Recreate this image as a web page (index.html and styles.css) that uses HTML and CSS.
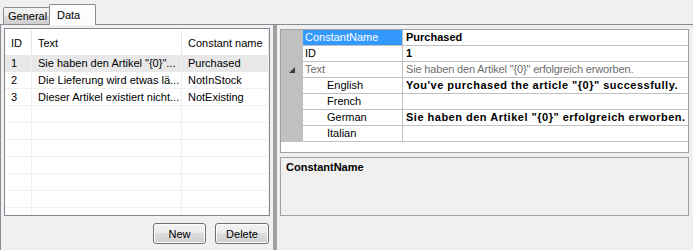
FILE: index.html
```html
<!DOCTYPE html>
<html>
<head>
<meta charset="utf-8">
<link rel="stylesheet" href="styles.css">
</head>
<body>
<div class="tabctl">
  <div class="tabstrip">
    <div class="tab">General</div>
    <div class="tab active">Data</div>
  </div>
  <div class="page">
    <div class="left">
      <div class="list">
        <div class="lrow lhead">
          <div class="c c1">ID</div>
          <div class="c c2">Text</div>
          <div class="c c3">Constant name</div>
        </div>
        <div class="lrow sel">
          <div class="c c1">1</div>
          <div class="c c2">Sie haben den Artikel "{0}"...</div>
          <div class="c c3">Purchased</div>
        </div>
        <div class="lrow">
          <div class="c c1">2</div>
          <div class="c c2">Die Lieferung wird etwas lä...</div>
          <div class="c c3">NotInStock</div>
        </div>
        <div class="lrow">
          <div class="c c1">3</div>
          <div class="c c2">Dieser Artikel existiert nicht...</div>
          <div class="c c3">NotExisting</div>
        </div>
        <div class="lrow"><div class="c c1"></div><div class="c c2"></div><div class="c c3"></div></div>
        <div class="lrow"><div class="c c1"></div><div class="c c2"></div><div class="c c3"></div></div>
        <div class="lrow"><div class="c c1"></div><div class="c c2"></div><div class="c c3"></div></div>
        <div class="lrow"><div class="c c1"></div><div class="c c2"></div><div class="c c3"></div></div>
        <div class="lrow"><div class="c c1"></div><div class="c c2"></div><div class="c c3"></div></div>
        <div class="lrow"><div class="c c1"></div><div class="c c2"></div><div class="c c3"></div></div>
        <div class="lrow"><div class="c c1"></div><div class="c c2"></div><div class="c c3"></div></div>
      </div>
      <div class="buttons">
        <button class="btn btn-new">New</button>
        <button class="btn btn-del">Delete</button>
      </div>
    </div>
    <div class="splitter"></div>
    <div class="right">
      <div class="pgrid">
        <div class="prow">
          <div class="pm"></div>
          <div class="pn selname">ConstantName</div>
          <div class="pv bold">Purchased</div>
        </div>
        <div class="prow">
          <div class="pm"></div>
          <div class="pn">ID</div>
          <div class="pv bold">1</div>
        </div>
        <div class="prow gray">
          <div class="pm"><svg class="tri" width="6" height="6" viewBox="0 0 6 6"><polygon points="0,6 6,0 6,6" fill="#3c3c3c"/></svg></div>
          <div class="pn">Text</div>
          <div class="pv tight">Sie haben den Artikel "{0}" erfolgreich erworben.</div>
        </div>
        <div class="prow">
          <div class="pm"></div>
          <div class="pn sub">English</div>
          <div class="pv bold wide">You've purchased the article "{0}" successfully.</div>
        </div>
        <div class="prow">
          <div class="pm"></div>
          <div class="pn sub">French</div>
          <div class="pv"></div>
        </div>
        <div class="prow">
          <div class="pm"></div>
          <div class="pn sub">German</div>
          <div class="pv bold wide">Sie haben den Artikel "{0}" erfolgreich erworben.</div>
        </div>
        <div class="prow">
          <div class="pm"></div>
          <div class="pn sub">Italian</div>
          <div class="pv"></div>
        </div>
      </div>
      <div class="desc">
        <div class="desc-title">ConstantName</div>
      </div>
    </div>
  </div>
</div>
</body>
</html>
```

FILE: styles.css
```css
html, body {
  margin: 0;
  padding: 0;
  background: #f0f0f0;
  font-family: "Liberation Sans", Arial, sans-serif;
  font-size: 11px;
  color: #000;
  overflow: hidden;
}

.tabctl {
  width: 693px;
  height: 250px;
  display: flex;
  flex-direction: column;
}

.tabstrip {
  height: 24px;
  display: flex;
  align-items: flex-end;
  padding-left: 3px;
}

.tab {
  box-sizing: border-box;
  border: 1px solid #898c95;
  border-bottom: none;
  border-radius: 2px 2px 0 0;
  height: 17px;
  width: 47px;
  padding: 2px 0 0 4px;
  background: linear-gradient(#f2f2f2, #ebebeb 50%, #dddddd 50%, #cfcfcf);
  color: #000;
  margin-right: -1px;
}

.tab.active {
  position: relative;
  height: 21px;
  margin-bottom: -1px;
  width: 47px;
  padding: 4px 0 0 7px;
  background: #fcfcfc;
}

.page {
  flex: 1;
  display: flex;
  border-top: 1px solid #898c95;
  border-left: 1px solid #898c95;
  min-height: 0;
}

.left {
  width: 272px;
  box-sizing: border-box;
  padding: 3px 0 0 3px;
  display: flex;
  flex-direction: column;
}

.list {
  box-sizing: border-box;
  width: 266px;
  height: 188px;
  border: 1px solid #828790;
  background: #fff;
  overflow: hidden;
  padding-top: 1px;
}

.lrow {
  display: flex;
  height: 17px;
  line-height: 17px;
}

.lrow .c {
  box-sizing: border-box;
  border-right: 1px solid #f0f0f0;
  border-bottom: 1px solid #f0f0f0;
  padding-left: 6px;
  white-space: nowrap;
  overflow: hidden;
}

.lrow .c1 { width: 27px; }
.lrow .c2 { width: 150px; }
.lrow .c3 { width: 87px; }

.lhead {
  height: 25px;
  line-height: 27px;
}

.lhead .c {
  border-bottom: none;
  border-right: 1px solid #e5e5e5;
}

.lrow.sel {
  background: #e8e8e8;
}

.lrow.sel .c {
  border-bottom-color: #e8e8e8;
}

.buttons {
  display: flex;
  justify-content: flex-end;
  gap: 9px;
  margin-top: 7px;
  padding-right: 1px;
  width: 266px;
  box-sizing: border-box;
}

.btn {
  box-sizing: border-box;
  height: 21px;
  border: 1px solid #707070;
  border-radius: 3px;
  background: linear-gradient(#f2f2f2, #ebebeb 50%, #dddddd 50%, #cfcfcf);
  font-family: "Liberation Sans", Arial, sans-serif;
  font-size: 11px;
  color: #000;
  padding: 0;
  box-shadow: inset 0 0 0 1px #fcfcfc;
}

.btn-new { width: 53px; }
.btn-del { width: 54px; }

.splitter {
  width: 4px;
  background: #a0a0a0;
}

.right {
  flex: 1;
  box-sizing: border-box;
  padding: 4px 4px 0 3px;
  display: flex;
  flex-direction: column;
}

.pgrid {
  box-sizing: border-box;
  height: 124px;
  border: 1px solid #a0a0a0;
  background: #fff;
}

.prow {
  display: flex;
  height: 16px;
  line-height: 15px;
}

.pm {
  width: 22px;
  background: #c0c0c0;
  display: flex;
  align-items: center;
  justify-content: center;
}

.pn {
  box-sizing: border-box;
  width: 100px;
  border-right: 1px solid #c0c0c0;
  border-bottom: 1px solid #c0c0c0;
  padding-left: 2px;
  white-space: nowrap;
}

.pn.sub { padding-left: 24px; }

.pn.selname {
  background: #3399ff;
  color: #fff;
  border-bottom-color: #c0c0c0;
}

.pv {
  flex: 1;
  border-bottom: 1px solid #c0c0c0;
  padding-left: 3px;
  white-space: nowrap;
  overflow: hidden;
}

.bold { font-weight: bold; }

.wide { letter-spacing: 0.5px; }

.tight { letter-spacing: -0.15px; }

.prow.gray .pn,
.prow.gray .pv {
  color: #6d6d6d;
}

.desc {
  margin-top: 4px;
  box-sizing: border-box;
  height: 59px;
  border: 1px solid #a0a0a0;
  padding: 3px 5px;
}

.desc-title {
  font-weight: bold;
}
```
